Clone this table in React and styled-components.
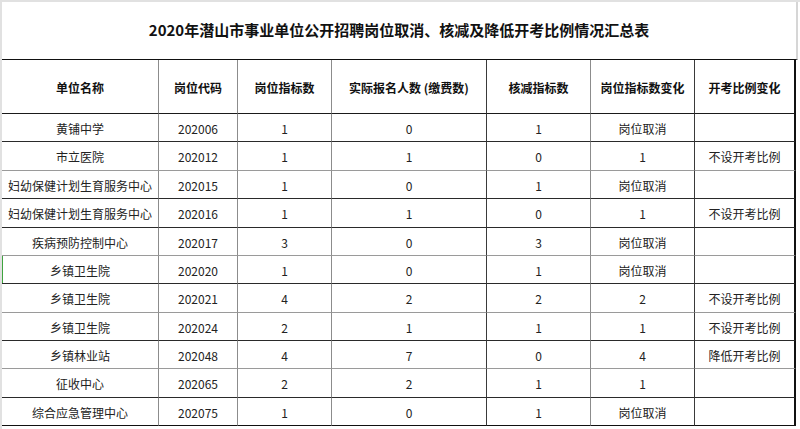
import React from 'react';
import styled, { createGlobalStyle } from 'styled-components';

const GlobalStyle = createGlobalStyle`
  html, body {
    margin: 0;
    padding: 0;
    background: #ffffff;
  }
  body {
    font-family: "Noto Sans CJK SC", "Noto Sans", sans-serif;
  }
`;

// column widths and the colour of each column's right-hand rule
const COLS = [157, 79, 94, 155, 104, 104, 101];
const RULES = ['#8c8c8c', '#8c8c8c', '#8c8c8c', '#3a3a3a', '#8c8c8c', '#3a3a3a', '#111111'];

const Sheet = styled.div`
  width: 800px;
  height: 429px;
  box-sizing: border-box;
  border-top: 2px solid #e1e1e1;
  border-left: 2px solid #e1e1e1;
  background: #ffffff;
  overflow: hidden;
`;

const Title = styled.div`
  width: 796px;
  height: 58px;
  box-sizing: border-box;
  display: flex;
  align-items: center;
  justify-content: center;
  font-size: 15px;
  font-weight: 700;
  color: #111;
  border-right: 2px solid #d6d6d6;
  border-bottom: 1px solid #111;
  padding-bottom: 2px;
`;

const Row = styled.div`
  display: grid;
  grid-template-columns: ${COLS.map((w) => `${w}px`).join(' ')};
  height: ${(p) => p.$h}px;
  width: 794px;
`;

const Cell = styled.div`
  box-sizing: border-box;
  display: flex;
  align-items: center;
  justify-content: center;
  white-space: nowrap;
  font-size: 12px;
  font-weight: ${(p) => (p.$head ? 700 : 400)};
  color: ${(p) => (p.$head ? '#111' : '#222')};
  border-bottom: 1px solid ${(p) => p.$line};
  border-right: ${(p) => (p.$last ? '2px' : '1px')} solid ${(p) => p.$rule};
  box-shadow: ${(p) => (p.$mark ? 'inset 1px 0 0 #3fa33f' : 'none')};
  padding-top: 1px;
`;

const HEAD = ['单位名称', '岗位代码', '岗位指标数', '实际报名人数 (缴费数)', '核减指标数', '岗位指标数变化', '开考比例变化'];

const ROWS = [
  { h: 28, line: '#2a2a2a', cells: ['黄铺中学', '202006', '1', '0', '1', '岗位取消', ''] },
  { h: 29, line: '#9a9a9a', cells: ['市立医院', '202012', '1', '1', '0', '1', '不设开考比例'] },
  { h: 28, line: '#2a2a2a', cells: ['妇幼保健计划生育服务中心', '202015', '1', '0', '1', '岗位取消', ''] },
  { h: 29, line: '#2a2a2a', cells: ['妇幼保健计划生育服务中心', '202016', '1', '1', '0', '1', '不设开考比例'] },
  { h: 28, line: '#9a9a9a', cells: ['疾病预防控制中心', '202017', '3', '0', '3', '岗位取消', ''] },
  { h: 28, line: '#2a2a2a', mark: true, cells: ['乡镇卫生院', '202020', '1', '0', '1', '岗位取消', ''] },
  { h: 29, line: '#9a9a9a', cells: ['乡镇卫生院', '202021', '4', '2', '2', '2', '不设开考比例'] },
  { h: 28, line: '#2a2a2a', cells: ['乡镇卫生院', '202024', '2', '1', '1', '1', '不设开考比例'] },
  { h: 28, line: '#9a9a9a', cells: ['乡镇林业站', '202048', '4', '7', '0', '4', '降低开考比例'] },
  { h: 29, line: '#2a2a2a', cells: ['征收中心', '202065', '2', '2', '1', '1', ''] },
  { h: 28, line: '#111111', cells: ['综合应急管理中心', '202075', '1', '0', '1', '岗位取消', ''] },
];

const App = () => {
  return (
    <>
      <GlobalStyle />
      <Sheet>
        <Title>2020年潜山市事业单位公开招聘岗位取消、核减及降低开考比例情况汇总表</Title>
        <Row $h={54}>
          {HEAD.map((text, i) => (
            <Cell key={i} $head $line="#1a1a1a" $rule={RULES[i]} $last={i === 6}>
              {text}
            </Cell>
          ))}
        </Row>
        {ROWS.map((row, r) => (
          <Row key={r} $h={row.h}>
            {row.cells.map((text, i) => (
              <Cell
                key={i}
                $line={row.line}
                $rule={RULES[i]}
                $last={i === 6}
                $mark={row.mark && i === 0}
              >
                {text}
              </Cell>
            ))}
          </Row>
        ))}
      </Sheet>
    </>
  );
};

export default App;
